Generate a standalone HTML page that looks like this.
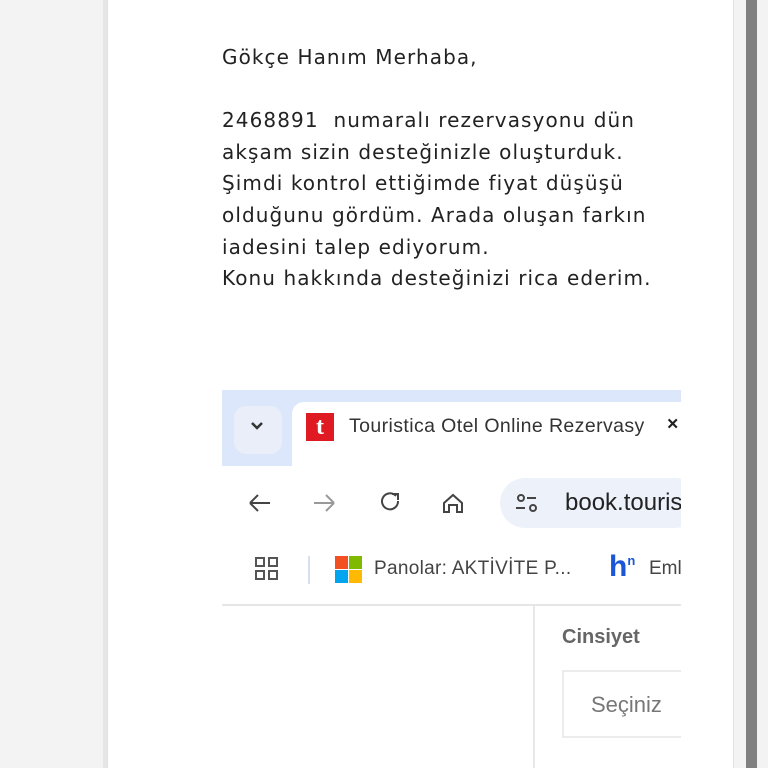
<!DOCTYPE html>
<html><head><meta charset="utf-8"><style>
*{margin:0;padding:0;box-sizing:border-box}
body{width:768px;height:768px;overflow:hidden;background:#f3f3f3;position:relative;font-family:"Liberation Sans",sans-serif}
.page{position:absolute;left:107px;top:0;width:627px;height:768px;background:#fff;border-left:1px solid #e2e2e2;border-right:1px solid #e2e2e2}
.lb{position:absolute;left:103px;top:0;width:4px;height:768px;background:#e6e6e6}
.bar{position:absolute;left:746px;top:0;width:11px;height:768px;background:#808080}
.txt{position:absolute;left:222px;top:42px;font-family:"DejaVu Sans",sans-serif;font-size:20px;letter-spacing:1.08px;line-height:31.6px;color:#222;white-space:pre}
.shot{position:absolute;left:222px;top:390px;width:459px;height:378px;background:#fff;overflow:hidden}
.tabs{position:absolute;left:0;top:0;width:459px;height:76px;background:#dde7fb}
.tab{position:absolute;left:70px;top:12px;width:400px;height:70px;background:#fff;border-radius:12px 12px 0 0}
.dd{position:absolute;left:12px;top:16px;width:48px;height:48px;border-radius:12px;background:#e9eef9}
.t{position:absolute;font-size:19.5px;color:#333;white-space:nowrap}
</style></head><body>
<div class="lb"></div>
<div class="page"></div>
<div class="bar"></div>
<div class="txt">Gökçe Hanım Merhaba,

2468891  numaralı rezervasyonu dün
akşam sizin desteğinizle oluşturduk.
Şimdi kontrol ettiğimde fiyat düşüşü
olduğunu gördüm. Arada oluşan farkın
iadesini talep ediyorum.
Konu hakkında desteğinizi rica ederim.</div>
<div class="shot">
 <div class="tabs"><div class="dd"></div><div class="tab"></div></div>
 <div style="position:absolute;left:0;top:76px;width:459px;height:8px;background:#fff"></div>
 <svg style="position:absolute;left:27px;top:30px" width="16" height="12"><path d="M3 3l5 5 5-5" stroke="#333" stroke-width="2.5" fill="none"/></svg>
 <div style="position:absolute;left:84px;top:23px;width:28px;height:28px;background:#e01a22;color:#fff;font:bold 24px 'Liberation Serif',serif;text-align:center;line-height:28px">t</div>
 <div class="t" style="left:127px;top:25px;letter-spacing:0.4px">Touristica Otel Online Rezervasy</div>
 <div class="t" style="left:445px;top:23px;font-weight:bold;color:#222">×</div>
 <div style="position:absolute;left:278px;top:88px;width:200px;height:50px;border-radius:25px;background:#edf1fa"></div>
 <svg style="position:absolute;left:24px;top:100px" width="300" height="26" fill="none" stroke="#444" stroke-width="2">
  <path d="M4 13h20M4 13l8-8M4 13l8 8"/>
  <path d="M68 13h20M88 13l-8-8M88 13l-8 8" stroke="#999"/>
  <path d="M150 6a8 8 0 1 0 2 5M146 4h6v6"/>
  <path d="M198 22v-9l9-8 9 8v9h-5v-7h-8v7z"/>
  <circle cx="275" cy="8" r="3"/><path d="M281 8h9M270 18h9"/><circle cx="287" cy="18" r="3"/>
 </svg>
 <div class="t" style="left:343px;top:99px;font-size:24px;color:#222">book.touris</div>
 <svg style="position:absolute;left:32px;top:166px" width="26" height="26" fill="none" stroke="#555" stroke-width="2"><rect x="2" y="2" width="8" height="8"/><rect x="15" y="2" width="8" height="8"/><rect x="2" y="15" width="8" height="8"/><rect x="15" y="15" width="8" height="8"/></svg>
 <div style="position:absolute;left:86px;top:166px;width:2px;height:28px;background:#d6e0f0"></div>
 <svg style="position:absolute;left:113px;top:166px" width="28" height="28"><rect x="0" y="0" width="13" height="13" fill="#f25022"/><rect x="14" y="0" width="13" height="13" fill="#7fba00"/><rect x="0" y="14" width="13" height="13" fill="#00a4ef"/><rect x="14" y="14" width="13" height="13" fill="#ffb900"/></svg>
 <div class="t" style="left:152px;top:168px;font-size:19px;color:#444;letter-spacing:0.3px">Panolar: AKTİVİTE P...</div>
 <div class="t" style="left:387px;top:160px;font:bold 30px 'Liberation Sans',sans-serif;color:#1a56d6">h<sup style="font-size:13px">n</sup></div>
 <div class="t" style="left:427px;top:168px;font-size:19px;color:#444">Eml</div>
 <div style="position:absolute;left:0;top:214px;width:459px;height:2px;background:#e6e6e6"></div>
 <div style="position:absolute;left:311px;top:216px;width:2px;height:162px;background:#e8e8e8"></div>
 <div class="t" style="left:340px;top:236px;font-weight:bold;color:#666;font-size:20px">Cinsiyet</div>
 <div style="position:absolute;left:340px;top:280px;width:140px;height:68px;border:2px solid #ececec;border-right:none"></div>
 <div class="t" style="left:369px;top:302px;font-size:22px;color:#777">Seçiniz</div>
</div>
</body></html>
